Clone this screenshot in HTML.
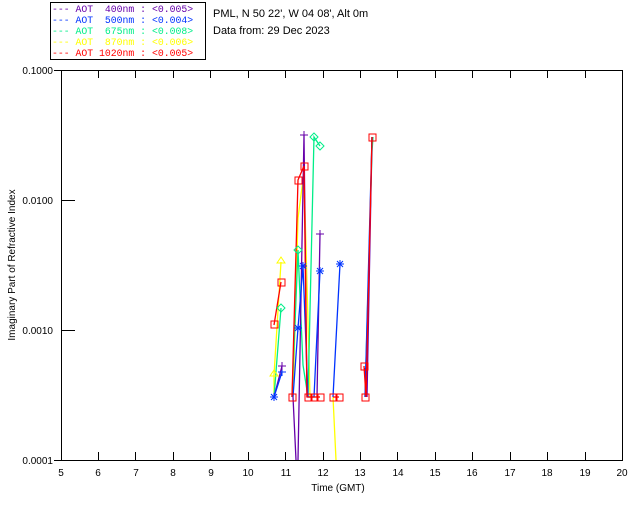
<!DOCTYPE html>
<html><head><style>
body{margin:0;background:#fff;width:640px;height:512px;overflow:hidden}
svg text{font-family:"Liberation Sans",sans-serif;font-size:11px}
svg text.lg{font-family:"Liberation Mono",monospace;font-size:9.8px;white-space:pre}
</style></head><body>
<svg width="640" height="512" xmlns="http://www.w3.org/2000/svg">
<rect x="50.5" y="2.5" width="155" height="57" fill="none" stroke="#000"/>
<text class="lg" x="52" y="12" fill="#6600aa" xml:space="preserve">--- AOT  400nm : &lt;0.005&gt;</text>
<text class="lg" x="52" y="23" fill="#0033ff" xml:space="preserve">--- AOT  500nm : &lt;0.004&gt;</text>
<text class="lg" x="52" y="34" fill="#00ee88" xml:space="preserve">--- AOT  675nm : &lt;0.008&gt;</text>
<text class="lg" x="52" y="45" fill="#ffff00" xml:space="preserve">--- AOT  870nm : &lt;0.006&gt;</text>
<text class="lg" x="52" y="56" fill="#ff0000" xml:space="preserve">--- AOT 1020nm : &lt;0.005&gt;</text>
<text x="213" y="17">PML, N 50 22', W 04 08', Alt 0m</text>
<text x="213" y="34">Data from: 29 Dec 2023</text>
<rect x="61.5" y="70.5" width="561" height="390" fill="none" stroke="#000"/>
<g stroke="#000">
<line x1="54" y1="70.5" x2="61" y2="70.5"/><line x1="61" y1="200.5" x2="75" y2="200.5"/><line x1="61" y1="330.5" x2="75" y2="330.5"/><line x1="54" y1="460.5" x2="61" y2="460.5"/>
<path d="M98.5 460v-8M135.5 460v-8M173.5 460v-8M210.5 460v-8M248.5 460v-8M285.5 460v-8M323.5 460v-8M360.5 460v-8M397.5 460v-8M435.5 460v-8M472.5 460v-8M510.5 460v-8M547.5 460v-8M585.5 460v-8"/>
<path d="M98.5 70v8M135.5 70v8M173.5 70v8M210.5 70v8M248.5 70v8M285.5 70v8M323.5 70v8M360.5 70v8M397.5 70v8M435.5 70v8M472.5 70v8M510.5 70v8M547.5 70v8M585.5 70v8"/>
</g>
<g text-anchor="end">
<text x="53" y="74" style="font-size:10px">0.1000</text><text x="53" y="204" style="font-size:10px">0.0100</text><text x="53" y="334" style="font-size:10px">0.0010</text><text x="53" y="464" style="font-size:10px">0.0001</text></g>
<g text-anchor="middle">
<text x="61" y="476" style="font-size:10px">5</text><text x="98" y="476" style="font-size:10px">6</text><text x="136" y="476" style="font-size:10px">7</text><text x="173" y="476" style="font-size:10px">8</text><text x="211" y="476" style="font-size:10px">9</text><text x="248" y="476" style="font-size:10px">10</text><text x="286" y="476" style="font-size:10px">11</text><text x="323" y="476" style="font-size:10px">12</text><text x="360" y="476" style="font-size:10px">13</text><text x="398" y="476" style="font-size:10px">14</text><text x="435" y="476" style="font-size:10px">15</text><text x="472" y="476" style="font-size:10px">16</text><text x="510" y="476" style="font-size:10px">17</text><text x="547" y="476" style="font-size:10px">18</text><text x="585" y="476" style="font-size:10px">19</text><text x="622" y="476" style="font-size:10px">20</text>
<text x="338" y="491" style="font-size:10px">Time (GMT)</text></g>
<text transform="translate(15,265) rotate(-90)" text-anchor="middle" style="font-size:10px">Imaginary Part of Refractive Index</text>
<g fill="none" stroke-width="1.3">
<path stroke="#ffff00" d="M274 397L274 375L281 262M293 397L298 218L304 172L310 397L320 397M333 397L336 460M366 397L372 137"/>
<path stroke="#00ee88" d="M274 397L281 308M292 397L298 250L303 365L308 397L314 137L320 146M365 397L372 152L373 137"/>
<path stroke="#6600aa" d="M274 397L282 366M293 397L296 460M298 460L304 135L307 397M317 397L320 234M365 368L367 397L372 137"/>
<path stroke="#0033ff" d="M274 397L282 372M293 397L298 328L303 266L308 397L314 397L320 271M333 397L340 264M365 397L372 137"/>
<path stroke="#ff0000" d="M274 325L281 282M292 397L298 180L304 166L307 397L320 397M333 397L339 397M364 366L366 397L372 137"/>
</g>
<g fill="none" stroke="#ff0000">
<rect x="271" y="321" width="7" height="7"/><rect x="278" y="279" width="7" height="7"/><rect x="295" y="177" width="7" height="7"/><rect x="301" y="163" width="7" height="7"/>
<rect x="289" y="394" width="7" height="7"/><rect x="305" y="394" width="7" height="7"/><rect x="311" y="394" width="7" height="7"/><rect x="317" y="394" width="7" height="7"/><rect x="330" y="394" width="7" height="7"/><rect x="336" y="394" width="7" height="7"/><rect x="362" y="394" width="7" height="7"/><rect x="361" y="363" width="7" height="7"/><rect x="369" y="134" width="7" height="7"/>
</g>
<g fill="none" stroke="#0033ff"><path d="M270 397h8M274 393v8M271 394l6 6M277 394l-6 6M278 372h8M282 368v8M294 328h8M298 324v8M295 325l6 6M301 325l-6 6M299 266h8M303 262v8M300 263l6 6M306 263l-6 6M316 271h8M320 267v8M317 268l6 6M323 268l-6 6M336 264h8M340 260v8M337 261l6 6M343 261l-6 6"/></g>
<g fill="none" stroke="#6600aa"><path d="M300 135h8M304 131v8M316 234h8M320 230v8M278 366h8M282 362v8"/></g>
<g fill="none" stroke="#00ee88"><path d="M281 304l4 4-4 4-4-4zM314 133l4 4-4 4-4-4zM320 142l4 4-4 4-4-4zM298 246l4 4-4 4-4-4z"/></g>
<g fill="none" stroke="#ffff00"><path d="M281 257l4 6h-8zM274 370l4 6h-8z"/></g>
</svg>
</body></html>
